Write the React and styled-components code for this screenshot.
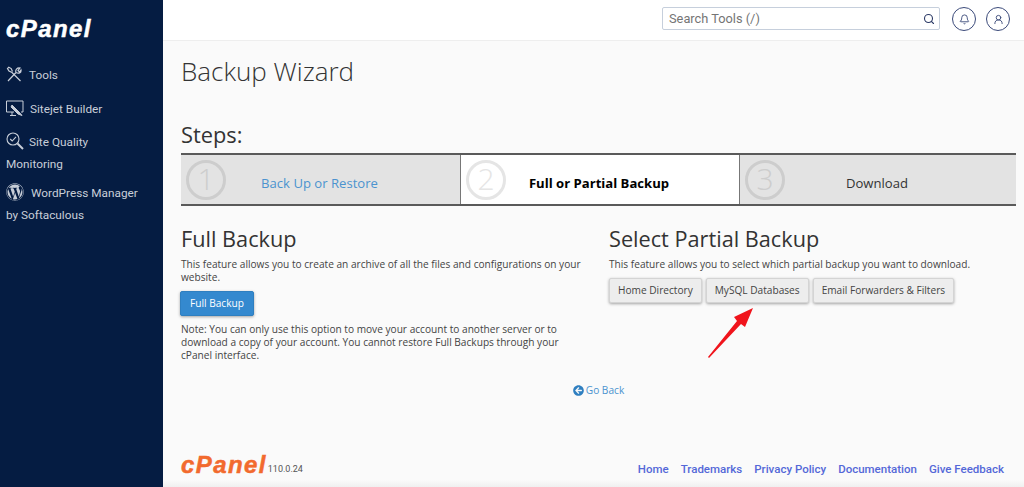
import styled, { createGlobalStyle } from "styled-components";
import { Search, Bell, UserRound } from "lucide-react";
import { FaWordpress, FaArrowCircleLeft } from "react-icons/fa";

const GlobalStyle = createGlobalStyle`
  html, body { margin: 0; height: 100%; overflow: hidden; }
  body { font-family: "Open Sans", "Liberation Sans", sans-serif; color: #333; }
  * { box-sizing: border-box; }
`;

/* ================= shell ================= */

const Page = styled.div`
  display: grid;
  grid-template-columns: 163px 1fr;
  height: 487px;
  background: #fafafa;
`;

const Sidebar = styled.aside`
  background: #051c42;
  color: #c8ced8;
  font-family: Roboto, sans-serif;
  font-size: 11.8px;
  padding: 17px 6px 0;
`;

const Logo = styled.div`
  font-family: "Liberation Sans", sans-serif;
  font-weight: 700;
  font-style: italic;
  color: ${(p) => p.$color};
  font-size: 24px;
  line-height: 1;
  letter-spacing: 1.4px;
  -webkit-text-stroke: 0.5px ${(p) => p.$color};
`;

const NavList = styled.nav`
  margin-top: 23px;
  display: flex;
  flex-direction: column;
`;

const NavItem = styled.a`
  display: block;
  line-height: 22px;
  height: ${(p) => p.$h}px;
`;

const NavIcon = styled.span`
  display: inline-flex;
  vertical-align: middle;
  margin-right: ${(p) => p.$gap || 7}px;
  margin-top: -3px;
`;

const Main = styled.main`
  display: flex;
  flex-direction: column;
  min-width: 0;
`;

const Header = styled.header`
  height: 41px;
  background: #fff;
  border-bottom: 1px solid #eeeeee;
  display: flex;
  align-items: flex-start;
  justify-content: flex-end;
  gap: 10px;
  padding: 7px 14px 0 0;
`;

const SearchBox = styled.div`
  width: 278px;
  height: 23px;
  margin-right: 2px;
  border: 1px solid #c6cfdc;
  border-radius: 2px;
  display: flex;
  align-items: center;
  justify-content: space-between;
  padding: 0 4px 0 6px;
  font-size: 12.8px;
  color: #757575;
  font-family: Roboto, sans-serif;
`;

const RoundButton = styled.div`
  width: 24px;
  height: 24px;
  border: 1px solid #3b4a7a;
  border-radius: 50%;
  display: flex;
  align-items: center;
  justify-content: center;
  color: #3b4a7a;
`;

/* ================= content ================= */

const Content = styled.div`
  flex: 1;
  padding: 0 8px 0 18px;
  position: relative;
`;

const PageTitle = styled.h1`
  margin: 12px 0 0;
  font-size: 26px;
  line-height: 37px;
  font-weight: 300;
  color: #333;
`;

const StepsTitle = styled.h2`
  margin: 28px 0 2px;
  font-size: 21.8px;
  line-height: 33px;
  font-weight: 400;
  color: #333;
`;

const Steps = styled.div`
  display: grid;
  grid-template-columns: 279px 279px 277px;
  height: 53px;
  border-top: 2px solid #5a5a5a;
  border-bottom: 2px solid #5a5a5a;
`;

const Step = styled.div`
  display: grid;
  grid-template-columns: 45px 1fr;
  align-items: center;
  padding-left: 5px;
  background: ${(p) => (p.$active ? "#fff" : "#e3e3e3")};
  border-left: ${(p) => (p.$first ? "none" : "1px solid #777")};
`;

const StepNumber = styled.div`
  width: 40px;
  height: 40px;
  border: 3px solid ${(p) => (p.$active ? "#e5e5e5" : "#cdcdcd")};
  border-radius: 50%;
  color: ${(p) => (p.$active ? "#e5e5e5" : "#cdcdcd")};
  font-size: 30px;
  font-weight: 300;
  line-height: 32px;
  text-align: center;
`;

const StepLabel = styled.div`
  text-align: center;
  font-size: 13.1px;
  padding-right: 52px;
  padding-top: 7px;
  color: ${(p) => p.$color || "#333"};
  font-weight: ${(p) => (p.$active ? 700 : 400)};
`;

const Columns = styled.div`
  display: grid;
  grid-template-columns: 428px 1fr;
  margin-top: 16px;
`;

const Section = styled.section`
  font-size: 10.15px;
  line-height: 13px;
  color: #444;
`;

const SectionTitle = styled.h3`
  margin: 0;
  font-size: 21.7px;
  line-height: 33px;
  font-weight: 400;
  color: #333;
`;

const Text = styled.p`
  margin: ${(p) => p.$top || 3}px 0 0;
  max-width: 410px;
`;

const Button = styled.button`
  font: inherit;
  height: 25px;
  padding: 0 ${(p) => (p.$primary ? 9 : 8)}px;
  border-radius: 2px;
  cursor: pointer;
  border: 1px solid ${(p) => (p.$primary ? "#2f7fc0" : "#d4d4d4")};
  background: ${(p) => (p.$primary ? "#3489cf" : "#ededed")};
  color: ${(p) => (p.$primary ? "#fff" : "#444")};
  box-shadow: 0 1px 3px rgba(0, 0, 0, 0.35);
`;

const ButtonRow = styled.div`
  display: flex;
  gap: 4px;
  margin-top: 7px;
`;

const PrimaryRow = styled.div`
  margin: 7px 0 0 -1px;
`;

const GoBack = styled.a`
  margin-top: 21px;
  display: flex;
  justify-content: center;
  align-items: center;
  gap: 2px;
  font-size: 10.15px;
  color: #4b93cf;
`;

const Arrow = styled.svg`
  position: absolute;
  left: 540px;
  top: 263px;
`;

/* ================= footer ================= */

const Footer = styled.footer`
  display: flex;
  align-items: flex-end;
  justify-content: space-between;
  padding: 0 20px 10px 18px;
  height: 46px;
  background: linear-gradient(to bottom, #fafafa 85%, #f0f0f0 100%);
`;

const Brand = styled.div`
  display: flex;
  align-items: flex-end;
  gap: 1px;
`;

const Version = styled.span`
  font-family: Roboto, sans-serif;
  font-size: 9px;
  line-height: 10px;
  margin-bottom: 3px;
  color: #555;
`;

const FooterLinks = styled.div`
  display: flex;
  gap: 12px;
  font-family: Roboto, sans-serif;
  font-size: 11.5px;
  font-weight: 500;
  line-height: 16px;
  color: #5468d8;
`;

const ToolsIcon = () => (
  <svg width="16" height="16" viewBox="0 0 16 16" fill="none" stroke="currentColor" strokeWidth="1.2">
    <path d="M2 15 L10 6.5 M10 6.5 C9 4 11 1.5 14 2 L12 4.5 L13.5 6 L15 4 C15.5 7 12.5 8 10 6.5" />
    <path d="M14.5 15 L6 6.5 L3 5 L1.5 2.5 L2.8 1.2 L5.2 2.6 L6.5 5.5" />
  </svg>
);

const SitejetIcon = () => (
  <svg width="18" height="17" viewBox="0 0 18 17" fill="none" stroke="currentColor" strokeWidth="1">
    <path d="M8 12 H0.5 V1 H17 V12 H15" />
    <path d="M6 12 V15 M4 15.5 H10" />
    <path d="M6 5 L13 12 L16 15.5 L12 14 L5 7 Z" fill="currentColor" />
  </svg>
);

const QualityIcon = () => (
  <svg width="18" height="18" viewBox="0 0 18 18" fill="none" stroke="currentColor" strokeWidth="1.1">
    <circle cx="7" cy="7" r="6" />
    <path d="M4.2 7 L6.2 9 L10 4.8" />
    <path d="M11.5 11.5 L17 17" strokeWidth="2" />
  </svg>
);

const App = () => {
  const links = ["Home", "Trademarks", "Privacy Policy", "Documentation", "Give Feedback"];

  return (
    <>
      <GlobalStyle />
      <Page>
        <Sidebar>
          <Logo $color="#fff">cPanel</Logo>
          <NavList>
            <NavItem $h={34}>
              <NavIcon><ToolsIcon /></NavIcon>Tools
            </NavItem>
            <NavItem $h={33}>
              <NavIcon $gap={6}><SitejetIcon /></NavIcon>Sitejet Builder
            </NavItem>
            <NavItem $h={51}>
              <NavIcon $gap={5}><QualityIcon /></NavIcon>Site Quality<br />Monitoring
            </NavItem>
            <NavItem $h={46}>
              <NavIcon $gap={7}><FaWordpress size={18} /></NavIcon>WordPress Manager<br />by Softaculous
            </NavItem>
          </NavList>
        </Sidebar>

        <Main>
          <Header>
            <SearchBox>
              Search Tools (/)
              <Search size={12} color="#2c3a66" strokeWidth={2.2} />
            </SearchBox>
            <RoundButton><Bell size={11} /></RoundButton>
            <RoundButton><UserRound size={11} /></RoundButton>
          </Header>

          <Content>
            <PageTitle>Backup Wizard</PageTitle>
            <StepsTitle>Steps:</StepsTitle>
            <Steps>
              <Step $first>
                <StepNumber>1</StepNumber>
                <StepLabel $color="#4b93cf">Back Up or Restore</StepLabel>
              </Step>
              <Step $active>
                <StepNumber $active>2</StepNumber>
                <StepLabel $active $color="#000">Full or Partial Backup</StepLabel>
              </Step>
              <Step>
                <StepNumber>3</StepNumber>
                <StepLabel>Download</StepLabel>
              </Step>
            </Steps>

            <Columns>
              <Section>
                <SectionTitle>Full Backup</SectionTitle>
                <Text>This feature allows you to create an archive of all the files and configurations on your website.</Text>
                <PrimaryRow><Button $primary>Full Backup</Button></PrimaryRow>
                <Text $top={7}>Note: You can only use this option to move your account to another server or to download a copy of your account. You cannot restore Full Backups through your cPanel interface.</Text>
              </Section>
              <Section>
                <SectionTitle>Select Partial Backup</SectionTitle>
                <Text>This feature allows you to select which partial backup you want to download.</Text>
                <ButtonRow>
                  <Button>Home Directory</Button>
                  <Button>MySQL Databases</Button>
                  <Button>Email Forwarders &amp; Filters</Button>
                </ButtonRow>
              </Section>
            </Columns>

            <GoBack><FaArrowCircleLeft size={11} color="#2f7fc0" /> Go Back</GoBack>

            <Arrow width="52" height="56" viewBox="0 0 52 56">
              <path d="M5 53 L34 17 L31 13 L50 4 L42 23 L38 20 L6 54 Z" fill="#f0141c" />
            </Arrow>
          </Content>

          <Footer>
            <Brand>
              <Logo $color="#f26a2e">cPanel</Logo>
              <Version>110.0.24</Version>
            </Brand>
            <FooterLinks>
              {links.map((l) => <a key={l}>{l}</a>)}
            </FooterLinks>
          </Footer>
        </Main>
      </Page>
    </>
  );
};

export default App;
